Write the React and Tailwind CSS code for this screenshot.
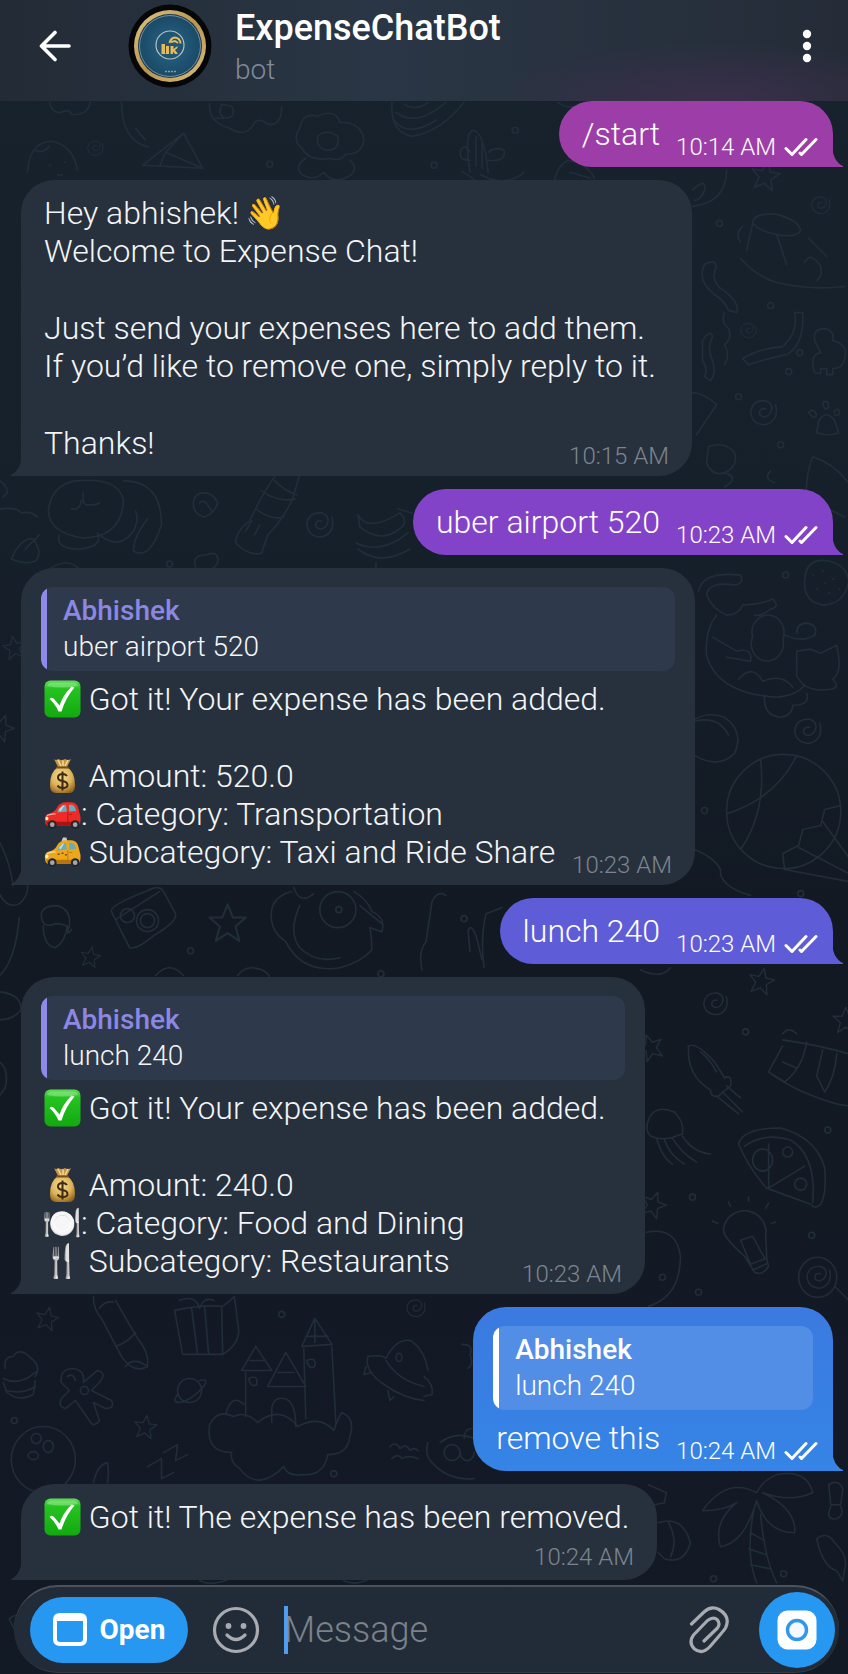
const tones = {
  dark: { bubble: 'bg-[#27313d] text-[#f4f5f7]', tail: 'text-[#27313d]', quote: 'bg-[#2e394b]', bar: 'bg-[#8f8aea]', name: 'text-[#8c88e2]' },
  magenta: { bubble: 'bg-[#9d3da8] text-white', tail: 'text-[#9d3da8]' },
  purple: { bubble: 'bg-[#8343c8] text-white', tail: 'text-[#8343c8]' },
  indigo: { bubble: 'bg-[#5f5cd8] text-white', tail: 'text-[#5f5cd8]' },
  blue: { bubble: 'bg-linear-to-b from-[#3b7ae0] to-[#3584e6] text-white', tail: 'text-[#3584e6]', quote: 'bg-[#538ee6]', bar: 'bg-white', name: 'text-white' },
}

/* ---------- emoji ---------- */

function CheckEmoji() {
  return (
    <svg viewBox="0 0 37 38" className="h-[38px] w-[37px]" role="img" aria-label="✅">
      <defs>
        <linearGradient id="tick" x1="0" y1="0" x2="0" y2="1">
          <stop offset="0" stopColor="#62dc5c" />
          <stop offset=".22" stopColor="#25c322" />
          <stop offset="1" stopColor="#12a90f" />
        </linearGradient>
      </defs>
      <rect x=".5" y=".5" width="36" height="37" rx="6" fill="url(#tick)" />
      <path d="M3 6 Q4 2.500 8 2.500 H29 Q33 2.500 34 6 Q18 9 3 6Z" fill="#9bf094" opacity=".5" />
      <path d="M5.500 19 Q8 16.500 10.500 19.500 L15.500 25.500 Q19 15 27.500 6.500 L30.500 7.500 Q21.500 18 17.500 31.500 H14.500 Q11 23.500 5.500 19Z" fill="#fff" />
    </svg>
  )
}

function BagEmoji() {
  return (
    <svg viewBox="0 0 37 38" className="h-[38px] w-[37px]" role="img" aria-label="💰">
      <defs>
        <radialGradient id="bag" cx=".45" cy=".35" r=".7">
          <stop offset="0" stopColor="#f5dc94" />
          <stop offset=".6" stopColor="#dcb257" />
          <stop offset="1" stopColor="#94661f" />
        </radialGradient>
      </defs>
      <path d="M10 2 Q12 4 14 2 Q18 4 21 2 Q24 4 27 2 L23 10 H14Z" fill="#c79643" />
      <path d="M14 3 L17 9 M19 3.500 V9 M24 3 L21 9" stroke="#f4dc9a" strokeWidth="1.500" />
      <path d="M14 10 H23 Q31 15 31 28 Q31 36 25 36 H12 Q6 36 6 28 Q6 15 14 10Z" fill="url(#bag)" />
      <path d="M13 10.500 H24" stroke="#795017" strokeWidth="2" strokeLinecap="round" />
      <path d="M23 19 Q21.500 17 18.500 17 Q14 17 14 20.500 Q14 23.300 18.500 24 Q23.500 24.800 23.500 28 Q23.500 31 18.500 31 Q15 31 13.500 28.500 M18.500 14.500 V33.500" fill="none" stroke="#3f2a10" strokeWidth="2" />
    </svg>
  )
}

function CarEmoji({ taxi }) {
  const body = taxi ? '#eda71c' : '#ee2b26'
  const dark = taxi ? '#b87508' : '#a91314'
  return (
    <svg viewBox="0 0 38 34" className="h-[34px] w-[38px]" role="img" aria-label={taxi ? '🚕' : '🚗'}>
      {taxi && <path d="M18 6 L19.500 2 H23 L24 6Z" fill="#c9cdd0" />}
      <path d="M1 24 Q0 18 5 16.500 Q11 15 13 11 Q16 5 23 5 H28 Q34 5 35.500 12 L37.500 20 Q38 27 35 29 H4 Q1 28 1 24Z" fill={body} />
      <path d="M13.500 15.500 Q15 8.500 22.500 7.500 L23.500 14.500 Q19 15 13.500 15.500Z M25.500 7.500 H28 Q32 8 33 14 L26 14.500Z" fill="#67aeb9" />
      <path d="M15 13 L19 8.500 L21 8 L17 14.500Z" fill="#b9dde0" />
      <path d="M2 25 H36.500 L35 29 H4Z" fill={dark} />
      <path d="M3 18.500 Q8 16.500 12 17" stroke="#fff" strokeOpacity=".6" strokeWidth="1.200" fill="none" />
      <path d="M24.500 15 V25 M26 17.500 H29" stroke={dark} strokeWidth=".9" />
      {taxi && <path d="M14 18.500 h2 v1.500 h-2z M18 17.500 h2 v1.500 h-2z M21.500 19 h2 v1.500 h-2z" fill="#7a4d10" />}
      <ellipse cx="3" cy="21.500" rx="1.500" ry="2" fill="#fff3c4" />
      <circle cx="8.500" cy="28" r="4.500" fill="#23252a" />
      <circle cx="8.500" cy="28" r="2.400" fill="#a3a8ad" />
      <circle cx="32" cy="28" r="4.500" fill="#23252a" />
      <circle cx="32" cy="28" r="2.400" fill="#a3a8ad" />
    </svg>
  )
}

const Emoji = ({ children }) => (
  <span className="inline-flex h-[38px] w-[37px] shrink-0 items-center justify-center text-[32px]">{children}</span>
)

/* ---------- wallpaper ---------- */

const star = 'M0 -14 L4 -4 L14 -4 L6 3 L9 14 L0 8 L-9 14 L-6 3 L-14 -4 L-4 -4 Z'
const spiral = 'M12 -8 Q16 8 2 12 Q-12 12 -13 -1 Q-11 -13 2 -12 Q11 -9 7 0 Q2 7 -4 2 Q-5 -5 2 -4'

const stars = [
  [228, 921, 1.3, 0], [91, 955, 0.7, 10], [15, 646, 0.8, -10], [2, 726, 0.9, 20], [48, 1316, 0.8, 12], [146, 1424, 0.8, 8],
  [765, 175, 1, 10], [761, 979, 0.9, 12], [845, 1018, 0.9, 0], [653, 1202, 0.9, 20], [650, 1045, 0.9, -20],
]
const spirals = [
  [320, 524, 1], [820, 205, 0.7], [748, 330, 0.6], [763, 412, 1], [807, 730, 1], [715, 1002, 0.9],
  [818, 1275, 0.9], [416, 1306, 0.7], [96, 148, 0.6],
]
const dots = [
  [719, 223], [770, 305], [799, 352], [788, 371], [780, 444], [738, 396], [785, 574], [704, 809], [464, 917], [191, 949],
  [745, 1030], [827, 1128], [692, 1195], [811, 1233], [698, 1290], [282, 1312], [15, 1418], [334, 1471], [713, 1576],
  [783, 1571], [270, 164], [434, 165], [515, 130], [170, 563], [662, 1275], [381, 972], [800, 892],
]
const doodles = [
  // paper plane, bean, palette, burger
  'M184 133 L143 165 L203 168 Z M184 133 L166 152 L203 168 M166 152 L160 166 M122 102 Q122 140 149 147 M136 128 L146 140',
  'M28 172 Q30 142 52 141 Q74 145 78 170 M50 165 h1 M65 162 h1 M58 174 q3 2 5 0 M36 150 q8 4 14 -4',
  'M50 101 Q52 114 62 112 Q70 108 72 114 Q88 116 91 102',
  'M210 103 Q208 122 230 128 Q246 138 254 124 Q258 116 268 124 Q282 126 282 106 M222 104 q-5 12 5 14 q10 -2 5 -12z M216 118 h8',
  'M392 102 Q390 132 412 136 Q440 132 464 102 M396 112 q20 16 50 -10 M394 120 q14 18 42 0 M404 104 q12 8 26 -3',
  // flower pot
  'M300 128 q2 -16 18 -12 q18 -8 22 6 q22 0 24 18 q-2 14 -18 14 q-6 8 -16 4 q-20 4 -28 -10 q-10 -8 -2 -20z M318 136 q8 -8 20 0 q2 14 -10 14 q-12 -2 -10 -14z M306 158 q-12 8 -4 16 q12 8 22 -2 q10 14 28 2 q6 -8 -2 -14',
  // cactus, roll
  'M470 172 Q464 136 472 130 Q484 130 488 172 M470 160 q-14 0 -8 -12 q4 -4 8 4 M488 160 q18 2 16 -10 q-8 -4 -16 2 M476 136 v30 M482 142 v26',
  'M556 101 q14 12 30 0 M554 180 q4 -16 14 -20 q20 4 26 18',
  // sleeping cat, ribbon
  'M49 510 Q52 484 76 480 Q120 476 124 500 Q122 536 84 537 Q50 532 49 510z M124 480 Q162 480 162 524 Q150 560 134 550 Q134 536 148 518 M60 534 q-4 14 20 14 q24 -2 18 -16 M100 534 q20 16 34 -4 q6 -12 2 -20 M84 492 q-2 14 6 12 q8 0 10 -2 M82 500 q-2 10 -10 8',
  'M12 558 q10 -22 22 -20 q10 14 2 22 q-10 4 -24 -2z M26 548 L40 534 M0 508 q18 -2 22 4 q10 -2 16 4 M0 480 q8 4 8 12 l-4 4',
  'M194 500 q2 -8 10 -8 q10 0 14 10 q-4 12 -14 14 q-12 -4 -10 -16z M200 502 q4 -4 8 2 l4 6',
  'M196 566 q-4 -12 10 -12 q10 -4 12 2 q2 8 -6 12 M50 568 q18 -12 30 0',
  // sock
  'M300 474 L292 500 Q282 520 268 534 L262 552 Q250 556 236 542 Q236 530 250 520 Q262 494 276 474 M262 490 q16 12 34 8 M256 508 q16 12 28 8 M275 480 q10 10 22 14 M252 520 l-6 10 M260 524 l-5 10',
  // bananas
  'M358 514 q10 18 42 -2 q8 8 2 14 q-20 18 -42 0z M356 542 q26 12 52 -10 M358 548 q22 18 52 0 M398 508 l14 4 M376 562 v8',
  // winter hat, ribbons, paw
  'M752 222 q2 -10 24 -8 q22 6 24 16 q-4 8 -24 4 q-20 -4 -24 -12z M752 224 l-6 26 M742 226 q-8 8 -2 16 M740 258 q16 18 36 24 q34 8 68 4 M776 234 l10 30 M808 238 l18 18 M804 262 q6 -12 16 4 q2 10 -4 14',
  'M704 264 q10 -6 12 2 q-8 16 10 26 q14 12 10 20 l-8 -2 q-4 -10 -14 -16 q-18 -14 -10 -30z M742 358 q16 -10 40 -12 q16 -14 12 -34 l8 0 q2 32 -16 42 q-20 4 -38 10z M702 340 q8 -12 10 -4 q-6 12 0 24 q4 12 -2 20 l-6 -4 q4 -8 -2 -16z M724 312 q-4 10 4 16 q4 10 -4 16 q6 10 0 20',
  'M818 420 q8 -12 16 0 l4 12 q-10 4 -22 0z M808 412 q4 -6 8 2 q-2 6 -8 -2z M822 402 q6 -4 6 4 q-4 6 -6 -4z M834 410 q6 -4 4 4 q-6 2 -4 -4z',
  'M814 340 q-2 -12 10 -12 q10 2 8 12 q16 4 12 18 q-2 10 -12 10 l0 6 h-6 v-6 h-6 v5 l-6 -1 q-6 -18 6 -20z',
  'M692 190 q14 -14 12 0 q-4 10 -10 10 M692 206 q34 -4 34 -36 M480 174 q24 14 44 -2 M462 171 l12 8 M570 172 l20 6',
  // fish, leaf cone, planet
  'M708 446 q16 -6 26 6 q4 14 -10 20 q-12 4 -18 -10z M722 472 q14 2 8 10 l-6 4 M812 456 q-8 20 -6 46 q20 4 38 14 M812 456 q20 6 36 26 M692 392 q12 0 24 12 l-20 30 M770 470 q-8 8 4 12',
  // strawberry
  'M804 578 q2 -22 24 -18 q18 4 20 20 q-4 22 -24 24 q-22 -2 -20 -26z M812 574 h1 M822 570 h1 M832 578 h1 M816 588 h1 M828 592 h1 M824 582 h1 M838 588 h1',
  // stretching cat
  'M698 590 q4 -20 42 -16 q4 8 -6 10 q-26 -4 -28 10 q6 14 20 20 q12 0 16 -10 q16 0 30 -6 q8 8 -2 10 q-10 8 -16 6 M716 614 q-12 16 -10 40 q10 38 70 42 q20 -2 28 -12 M752 636 a16 17 0 1 0 30 2 a16 17 0 1 0 -30 -2 M796 650 l14 -2 l10 4 l16 -8 l2 12 q2 16 -6 22 q8 8 -2 10 q-26 4 -34 -14z M784 634 q18 8 30 0 q4 -10 -8 -12 q-10 0 -10 10 M764 694 q-2 20 16 22 q12 -2 12 -12 q18 0 14 -12 M712 636 l24 14 q16 -4 14 10 l-24 -4 M738 678 q14 -16 24 2 q20 -8 30 6',
  // peach, ball, cone
  'M694 718 q14 -8 30 -2 q20 14 10 36 q-16 16 -40 2 M694 720 q24 -6 34 14',
  'M726 810 a57 57 0 1 0 114 0 a57 57 0 1 0 -114 0 M727 812 Q776 796 796 754 M760 758 Q766 810 740 848 M840 804 L824 808 L820 824 L802 828 L798 844 L782 852 L784 868 L848 880 M822 820 L848 856 M798 846 L848 872',
  'M694 848 q20 8 26 20 q-2 16 30 26',
  // acorn, camera, duck
  'M42 912 q2 -8 16 -8 q14 4 12 20 q-4 12 2 4 M42 912 q0 16 14 10 q8 0 14 4 M44 924 q0 20 12 22 q10 -6 12 -22',
  'M112 910 q-2 -6 34 -20 q14 -8 18 0 l12 22 q2 8 -22 22 q-16 14 -24 12z M121 914 a7 7 0 1 0 14 0 a7 7 0 1 0 -14 0 M137 919 a11 11 0 1 0 22 0 a11 11 0 1 0 -22 0 M141 919 a7 7 0 1 0 14 0 a7 7 0 1 0 -14 0 M116 918 L160 890',
  'M320 908 a18 18 0 1 0 36 0 a18 18 0 1 0 -36 0 M336 908 a3 3 0 1 0 6 0 a3 3 0 1 0 -6 0 M292 890 q-24 6 -20 30 q2 12 14 20 q16 32 54 26 q22 -6 32 -18 q0 -12 -2 -22 l12 4 q4 -14 -10 -20 q-4 -12 -18 -20 M300 904 q-12 26 0 42 q16 16 40 10 M360 904 l22 18 M294 886 q6 18 20 6',
  'M156 974 q14 -16 28 0 M238 974 q8 -12 24 -6 q8 4 8 8 M0 974 q16 -14 20 -58 M0 990 q22 2 22 18 q-8 10 -22 10 M0 1060 q10 6 6 26 l-6 8 M0 892 q8 16 20 10 q10 -8 8 -20 M0 840 q10 18 14 44',
  'M422 968 q-4 -18 4 -28 l6 -40 q6 -12 14 -6 M484 966 q-4 -30 2 -54 l16 -6 M470 950 l-2 -20 q2 -10 8 4 l6 24 M640 968 q20 10 30 -2',
  // squid, jellyfish, bunting, pizza
  'M688 1044 q8 -4 26 16 l10 16 q8 -4 6 8 l-12 10 q-8 2 -8 -6 q-24 -14 -22 -44z M716 1094 l22 18 M722 1090 l20 20 M726 1084 l14 12 M700 1050 q10 8 16 20',
  'M648 1118 q6 -16 26 -8 q10 10 8 22 l-12 4 q-12 2 -20 -2 q-6 -6 -2 -16z M656 1136 q6 20 16 26 M664 1138 q6 16 20 24 M672 1136 q8 14 24 24 M682 1134 q10 16 28 18',
  'M782 1038 q40 6 66 14 M768 1070 q26 20 68 32 l12 2 M782 1044 l-14 26 l16 10 q18 -14 22 -40 M822 1048 l-6 26 l8 16 q10 -14 12 -38 M796 1066 l-14 -6 M782 1032 q6 -8 14 0',
  'M738 1142 q4 -16 42 -16 q36 10 44 40 q2 26 -4 36 q-6 6 -10 0 l-44 -16 q-18 -20 -28 -44z M744 1144 q20 -14 46 -6 q26 16 22 62 M768 1186 l0 -44 M768 1186 l36 -22 M752 1158 a10 11 0 1 0 20 0 a10 11 0 1 0 -20 0 M782 1150 a5 5 0 1 0 10 0 a5 5 0 1 0 -10 0 M794 1182 a6 6 0 1 0 12 0 a6 6 0 1 0 -12 0',
  // light bulb, lollipop
  'M744 1254 C728 1240 722 1232 723 1226 A21 21 0 1 1 765 1234 Q766 1246 766 1256 L768 1264 Q762 1274 754 1270 Z M740 1238 L752 1234 L764 1256 M740 1238 L750 1262 M750 1262 l16 -6 M752 1268 l15 -7 M730 1204 l-2 -4 M748 1199 v-4 M765 1206 l3 -5 M712 1219 l5 2 M771 1221 l4 -1',
  'M798 1275 a19 20 0 1 0 38 0 a19 20 0 1 0 -38 0 M834 1284 L848 1298 M646 1230 q30 -6 34 24 q0 40 -32 50',
  // pill, gift, saucer
  'M94 1294 q0 14 8 22 l20 38 q12 18 26 10 q2 -14 -10 -28 l-22 -38 M116 1344 q12 -4 20 -14 M100 1306 q6 -8 14 -6 M126 1364 q8 -10 22 0',
  'M175 1308 l8 44 l40 0 q16 -10 16 -24 l-4 -32 M175 1308 q28 -6 48 -4 q8 -6 12 -10 M192 1306 l6 46 M205 1304 l4 48 M222 1304 l1 48 M180 1298 q16 -6 20 8 q4 -12 14 -8',
  'M368 1354 q14 -2 18 2 q10 -20 24 -18 q14 8 18 30 M368 1354 q-4 14 16 28 q20 14 40 16 M386 1358 q12 20 38 26 M396 1355 a3 4 0 1 0 6 0 a3 4 0 1 0 -6 0 M388 1388 l2 10 l4 -4 M366 1364 l-2 8 l8 -2',
  // cupcake, gingerbread man, planet
  'M6 1366 q-2 -12 8 -12 q6 -10 18 2 q10 8 4 18 M4 1376 q16 8 32 -6 M4 1380 l4 10 q12 10 26 2 l2 -14 M6 1388 q18 4 30 -4',
  'M62 1380 q-2 -14 12 -14 q12 2 10 14 l14 -12 q10 2 2 12 l-8 8 l20 10 q4 8 -6 8 l-12 -6 l6 18 q-6 8 -10 0 l-14 -20 l-10 8 q-8 -2 -4 -10 l8 -8z M68 1374 q6 -4 8 4 M81 1388 a4 4 0 1 0 8 0 a4 4 0 1 0 -8 0',
  'M178 1388 a12 12 0 1 0 24 0 a12 12 0 1 0 -24 0 M200 1378 q10 -2 4 6 q-12 14 -24 16 q-8 0 -2 -8',
  // bowling ball, snores
  'M12 1457 a32 33 0 1 0 64 0 a32 33 0 1 0 -64 0 M32 1436 a5 5 0 1 0 10 0 a5 5 0 1 0 -10 0 M44 1444 a5 6 0 1 0 10 0 a5 6 0 1 0 -10 0 M29 1453 a5 4 0 1 0 10 0 a5 4 0 1 0 -10 0',
  'M148 1464 l14 -8 l0 20 l12 -6 M164 1450 l14 -8 l-2 16 l12 -6 M94 1480 q4 -18 14 -20 q2 10 0 20',
  // castle on a cloud
  'M246 1414 V1370 M242 1368 L256 1344 L272 1368 Z M268 1384 L286 1350 L306 1384 Z M302 1344 L315 1316 L332 1342 Z M304 1346 L306 1416 M332 1344 L336 1420 M272 1420 v-14 q2 -12 12 -10 q12 2 12 28 M249 1376 q10 -4 8 6 q-6 4 -8 -6z M307 1358 q10 -4 8 6 q-6 4 -8 -6z M308 1334 h20 M315 1318 v22 M250 1358 h14 M278 1370 h16',
  'M226 1412 q6 -22 18 -10 M232 1450 q-26 0 -22 -28 q8 -16 24 -8 q12 -6 24 6 q22 -18 40 4 q22 -12 36 4 q4 -12 8 -18 q14 6 8 24 q-2 18 -22 18 q-4 22 -26 20 q-14 2 -18 -8 q-26 26 -44 2 q-10 -6 -8 -16z',
  'M390 1444 q6 -6 10 2 q6 -6 10 2 q4 -4 8 0 M392 1456 q6 -6 10 0 q6 -4 16 0 M424 1374 q10 8 8 18 l-8 2 M462 1342 q12 0 8 10 q4 10 -2 14 M464 1436 q0 -10 8 -10 M428 1440 q-4 12 4 20 M440 1440 q16 -12 34 -4 M432 1460 q16 18 42 16 M444 1450 a8 8 0 1 0 16 0 a8 8 0 1 0 -16 0 M460 1450 a7 8 0 1 0 14 0',
  // palm tree, egg, drumstick
  'M756 1490 Q726 1474 702 1508 Q724 1508 736 1500 Q712 1520 720 1544 Q744 1540 756 1498 Q766 1530 794 1530 Q796 1506 762 1490 Q790 1500 812 1490 Q806 1466 776 1472 Q762 1478 756 1490 M754 1504 Q744 1550 756 1580 M760 1512 Q764 1556 776 1580 M750 1530 l14 8 M748 1546 l18 6 M750 1562 l20 4',
  'M658 1520 q24 -8 32 20 q-6 22 -26 16 l-6 -6 M668 1520 q10 18 2 34 M816 1536 q10 -8 18 4 q14 14 10 26 l-2 12 l-6 -10 q-14 -4 -20 -32z M828 1482 q10 -6 14 4 l-2 16 l-10 0z M830 1504 q-6 14 6 12 q8 -4 4 -12 M648 1482 l18 8 l-2 10 l-10 2',
  'M30 1556 l-8 -36 l12 -6 M200 1578 q12 6 30 -2 M344 1578 q14 6 28 -4 M10 1616 q8 -8 14 4 l-8 8z',
]

function Wallpaper() {
  return (
    <svg
      viewBox="0 0 848 1674"
      preserveAspectRatio="xMidYMin slice"
      className="absolute inset-0 size-full"
      fill="none"
      stroke="#212e39"
      strokeWidth="1.600"
      strokeLinecap="round"
      strokeLinejoin="round"
      aria-hidden="true"
    >
      {doodles.map((d, i) => <path key={i} d={d} />)}
      {stars.map(([x, y, s, r], i) => <path key={i} d={star} transform={`translate(${x} ${y}) rotate(${r}) scale(${s})`} />)}
      {spirals.map(([x, y, s], i) => <path key={i} d={spiral} transform={`translate(${x} ${y}) scale(${s})`} />)}
      {dots.map(([x, y], i) => <circle key={i} cx={x} cy={y} r="3" />)}
    </svg>
  )
}

/* ---------- header ---------- */

function Avatar() {
  return (
    <svg viewBox="0 0 84 84" className="size-[84px] shrink-0" aria-hidden="true">
      <defs>
        <linearGradient id="gold" x1="0" y1="0" x2="1" y2="1">
          <stop offset="0" stopColor="#e0c684" />
          <stop offset=".5" stopColor="#b8954f" />
          <stop offset="1" stopColor="#dcbf78" />
        </linearGradient>
        <radialGradient id="sea">
          <stop offset="0" stopColor="#2a6587" />
          <stop offset="1" stopColor="#1a4a66" />
        </radialGradient>
      </defs>
      <circle cx="42" cy="42" r="41.500" fill="#050608" />
      <circle cx="42" cy="42" r="36" fill="url(#gold)" />
      <circle cx="42" cy="42" r="32" fill="#17384f" />
      <circle cx="42" cy="42" r="30.500" fill="url(#sea)" stroke="#8fa5b3" strokeWidth=".8" />
      <circle cx="42" cy="41" r="14" fill="#205573" stroke="#b9c2c0" strokeWidth="1.200" />
      <path d="M33.500 40 h3.500 v9.500 h1 v-7.500 h3 v8 h-7.500z M42.500 42 h3 v3 l4 -3 v2 l-2.500 2 l3 4 h-3 l-2 -2.500 v2.500 h-2.500z" fill="#e3bb5c" />
      <path d="M41.500 39 q1 -5 5.500 -5.500 q5 .5 5.500 6 M43 38 l4 -1 l3 2" fill="none" stroke="#e3bb5c" strokeWidth="2" />
      <path d="M37 67.500 h11" stroke="#8d9ba3" strokeWidth="1.400" strokeDasharray="2 1" />
    </svg>
  )
}

function Header() {
  return (
    <header className="relative flex h-[101px] items-center bg-[radial-gradient(ellipse_220px_60px_at_84%_100%,#3b2f4b,transparent),linear-gradient(90deg,#232b36,#2a3645_45%,#252c38)] pr-9 pb-[10px] pl-[39px] shadow-[0_1px_0_#19222c]">
      <button type="button" aria-label="Back" className="mr-[57px] text-white">
        <svg viewBox="0 0 32 32" className="size-8" fill="none" stroke="currentColor" strokeWidth="3.600" strokeLinecap="round" strokeLinejoin="round">
          <path d="M30 16 H3 M16 2.500 L2.500 16 L16 29.500" />
        </svg>
      </button>
      <Avatar />
      <div className="ml-[23px] flex-1 pt-1">
        <h1 className="text-[36px] leading-10 font-medium text-white">ExpenseChatBot</h1>
        <p className="mt-1 text-[28px] leading-9 font-light text-[#818b96]">bot</p>
      </div>
      <button type="button" aria-label="More options" className="text-white">
        <svg viewBox="0 0 10 34" className="h-[34px] w-[10px]" fill="currentColor">
          <circle cx="5" cy="5" r="4.200" />
          <circle cx="5" cy="17" r="4.200" />
          <circle cx="5" cy="29" r="4.200" />
        </svg>
      </button>
    </header>
  )
}

/* ---------- messages ---------- */

function Time({ children, out }) {
  return (
    <span className={`flex shrink-0 items-center text-[24px] leading-[30px] whitespace-nowrap ${out ? 'text-white' : 'text-[#7c858f]'}`}>
      <time>{children}</time>
      {out && (
        <svg viewBox="0 0 34 20" className="ml-2 h-5 w-[34px]" fill="none" stroke="currentColor" strokeWidth="3" strokeLinecap="round" strokeLinejoin="round" role="img" aria-label="Read">
          <path d="M2 11.500 L8 17.500 L22 2.500" />
          <path d="M16 16 L17.500 17.500 L32 2.500" />
        </svg>
      )}
    </span>
  )
}

function Bubble({ tone = 'dark', out, quote, width, children }) {
  const t = tones[tone]
  return (
    <article className={`relative max-w-full rounded-[33px] ${t.bubble} ${width ?? ''} ${out ? 'self-end rounded-br-none' : 'self-start rounded-bl-none'}`}>
      {quote && (
        <blockquote className={`mx-5 mt-[19px] -mb-[5px] flex overflow-hidden rounded-xl text-[28px] leading-9 ${t.quote}`}>
          <span className={`w-[6px] ${t.bar}`} />
          <div className="px-4 py-[6px]">
            <p className={`font-medium ${t.name}`}>Abhishek</p>
            <p>{quote}</p>
          </div>
        </blockquote>
      )}
      <div className={`pt-[14px] pb-[5px] pl-[23px] ${out ? 'pr-[15px]' : 'pr-[23px]'}`}>{children}</div>
      <svg viewBox="0 0 11 24" className={`absolute bottom-0 h-6 w-[11px] ${t.tail} ${out ? '-right-[10px] -scale-x-100' : '-left-[10px]'}`} fill="currentColor" aria-hidden="true">
        <path d="M11 0 C11 12 7 20 0 23 V24 H11Z" />
      </svg>
    </article>
  )
}

const Line = ({ emoji, children }) => (
  <p className="flex">
    {emoji && <Emoji>{emoji}</Emoji>}
    <span className="whitespace-pre-wrap">{children}</span>
  </p>
)
const Gap = () => <div className="h-[39px]" />

// Closing line of a bubble, with the time tucked in at its lower right
const LastLine = ({ time, out, children }) => (
  <div className="flex items-end justify-between gap-4">
    <div className="mb-[9px]">{children}</div>
    <Time out={out}>{time}</Time>
  </div>
)

function Messages() {
  return (
    <main className="relative flex flex-col gap-[13px] pr-[15px] pl-[21px] text-[32px] leading-[38px] font-light">
      <Bubble tone="magenta" out>
        <LastLine time="10:14 AM" out>/start</LastLine>
      </Bubble>

      <Bubble width="w-[671px]">
        <p className="flex gap-2">Hey abhishek! <Emoji>👋</Emoji></p>
        <Line>Welcome to Expense Chat!</Line>
        <Gap />
        <Line>Just send your expenses here to add them.</Line>
        <Line>If you’d like to remove one, simply reply to it.</Line>
        <Gap />
        <LastLine time="10:15 AM">Thanks!</LastLine>
      </Bubble>

      <Bubble tone="purple" out>
        <LastLine time="10:23 AM" out>uber airport 520</LastLine>
      </Bubble>

      <Bubble width="w-[674px]" quote="uber airport 520">
        <Line emoji={<CheckEmoji />}> Got it! Your expense has been added.</Line>
        <Gap />
        <Line emoji={<BagEmoji />}> Amount: 520.0</Line>
        <Line emoji={<CarEmoji />}>: Category: Transportation</Line>
        <LastLine time="10:23 AM">
          <Line emoji={<CarEmoji taxi />}> Subcategory: Taxi and Ride Share</Line>
        </LastLine>
      </Bubble>

      <Bubble tone="indigo" out>
        <LastLine time="10:23 AM" out>lunch 240</LastLine>
      </Bubble>

      <Bubble width="w-[624px]" quote="lunch 240">
        <Line emoji={<CheckEmoji />}> Got it! Your expense has been added.</Line>
        <Gap />
        <Line emoji={<BagEmoji />}> Amount: 240.0</Line>
        <Line emoji="🍽️">: Category: Food and Dining</Line>
        <LastLine time="10:23 AM">
          <Line emoji="🍴"> Subcategory: Restaurants</Line>
        </LastLine>
      </Bubble>

      <Bubble tone="blue" out quote="lunch 240">
        <LastLine time="10:24 AM" out>remove this</LastLine>
      </Bubble>

      <Bubble width="w-[636px]">
        <Line emoji={<CheckEmoji />}> Got it! The expense has been removed.</Line>
        <div className="flex justify-end pt-[6px] pb-[3px]"><Time>10:24 AM</Time></div>
      </Bubble>
    </main>
  )
}

/* ---------- composer ---------- */

function Composer() {
  return (
    <form className="relative mt-[5px] mr-[9px] mb-1 ml-[14px] flex h-[88px] items-center rounded-full border-t-2 border-b border-t-[#4a535e] border-b-[#313c48] bg-[#212c38] pr-1 pl-4" onSubmit={(e) => e.preventDefault()}>
      <button type="button" className="flex h-[66px] w-[158px] shrink-0 items-center justify-center gap-[13px] rounded-full bg-[#2798f2] text-[28px] font-bold text-white">
        <svg viewBox="0 0 34 33" className="h-[33px] w-[34px]" aria-hidden="true">
          <path fill="currentColor" fillRule="evenodd" d="M7 0 H27 Q34 0 34 7 V26 Q34 33 27 33 H7 Q0 33 0 26 V7 Q0 0 7 0Z M4 8 V26 Q4 29 7 29 H27 Q30 29 30 26 V8Z" />
        </svg>
        Open
      </button>
      <button type="button" aria-label="Emoji" className="ml-6 text-[#a9abb1]">
        <svg viewBox="0 0 48 48" className="size-12" fill="none" stroke="currentColor" strokeWidth="3.200" strokeLinecap="round">
          <circle cx="24" cy="24" r="21.500" />
          <circle cx="16.500" cy="20" r="2.900" fill="currentColor" stroke="none" />
          <circle cx="31.500" cy="20" r="2.900" fill="currentColor" stroke="none" />
          <path d="M15 29 Q24 38 33 29" />
        </svg>
      </button>
      <label className="relative ml-6 flex flex-1 items-center">
        <span className="absolute left-0 h-[48px] w-1 bg-[#4f9df0]" />
        <input type="text" aria-label="Message" placeholder="Message" className="w-full min-w-0 bg-transparent text-[36px] leading-[44px] font-light text-white outline-none placeholder:text-[#7b828c]" />
      </label>
      <button type="button" aria-label="Attach" className="mr-[30px] text-[#a9abb1]">
        <svg viewBox="0 0 40 48" className="h-12 w-10" fill="none" stroke="currentColor" strokeWidth="3.200" strokeLinecap="round" strokeLinejoin="round">
          <path d="M2.500 18 L15 6 Q22 -.5 30 3.500 Q42 10.500 36.500 22 Q35 24.500 21 40.500 Q13 49 5.500 43 Q-1 36.500 4.500 29 L18.500 14.500 Q24.500 10 28.500 14 Q31.500 18 28.500 22 L15 35" />
        </svg>
      </button>
      <button type="button" aria-label="Camera" className="flex size-[76px] shrink-0 items-center justify-center rounded-full bg-[#2798f2]">
        <svg viewBox="0 0 40 40" className="size-10" aria-hidden="true">
          <rect x=".5" y=".5" width="39" height="39" rx="10" fill="#fff" />
          <circle cx="20" cy="20" r="9.500" fill="#f4f8ff" stroke="#2f97ee" strokeWidth="3.400" />
        </svg>
      </button>
    </form>
  )
}

export default function App() {
  return (
    <div className="relative min-h-screen overflow-hidden bg-[linear-gradient(180deg,#18222d,#16202b_30%,#121923_55%,#121a25)]" style={{ fontFamily: 'Roboto, "Noto Color Emoji", sans-serif' }}>
      <Wallpaper />
      <Header />
      <Messages />
      <Composer />
    </div>
  )
}
